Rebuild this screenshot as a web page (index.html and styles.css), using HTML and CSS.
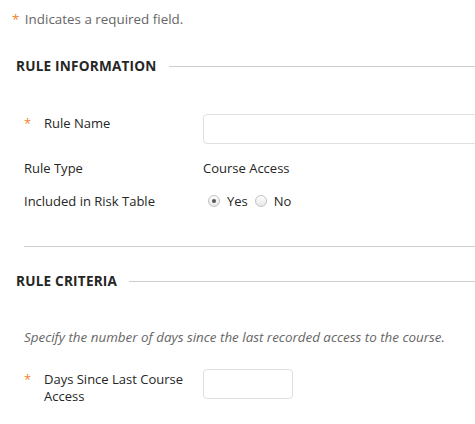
FILE: index.html
```html
<!DOCTYPE html>
<html>
<head>
<meta charset="utf-8">
<link rel="stylesheet" href="styles.css">
</head>
<body>
<div class="page">
  <p class="req-note"><span class="star">*</span> Indicates a required field.</p>

  <div class="section">
    <h2 class="section-title"><span>RULE INFORMATION</span></h2>
    <div class="rows">
      <div class="row row-input">
        <div class="label"><span class="star">*</span><span>Rule Name</span></div>
        <div class="value"><input class="text-input wide" type="text"></div>
      </div>
      <div class="row">
        <div class="label plain">Rule Type</div>
        <div class="value">Course Access</div>
      </div>
      <div class="row">
        <div class="label plain">Included in Risk Table</div>
        <div class="value radios">
          <span class="radio checked"></span><span class="radio-label">Yes</span>
          <span class="radio"></span><span class="radio-label">No</span>
        </div>
      </div>
    </div>
  </div>

  <div class="divider"></div>

  <div class="section">
    <h2 class="section-title"><span>RULE CRITERIA</span></h2>
    <p class="instructions">Specify the number of days since the last recorded access to the course.</p>
    <div class="row row-input">
      <div class="label"><span class="star">*</span><span>Days Since Last Course<br>Access</span></div>
      <div class="value"><input class="text-input small" type="text"></div>
    </div>
  </div>
</div>
</body>
</html>
```
FILE: styles.css
```css
* { box-sizing: border-box; }
html, body { margin: 0; padding: 0; background: #fff; }
body {
  font-family: "Open Sans", "Liberation Sans", sans-serif;
  font-size: 13px;
  color: #262626;
  overflow: hidden;
}
.page { padding: 10px 0 0 0; width: 475px; overflow: hidden; }
.req-note {
  margin: 0 0 0 12px;
  font-size: 13.4px;
  line-height: 18px;
  color: #666;
}
.star { color: #f0822d; }
.req-note .star { margin-right: 2px; }
.section-title {
  margin: 29px 0 0 16px;
  display: flex;
  align-items: center;
  font-size: 13.6px;
  font-weight: 700;
  letter-spacing: 0.2px;
  line-height: 18px;
  color: #262626;
}
.section-title::after {
  content: "";
  flex: 1;
  height: 1px;
  background: #cdcdcd;
  margin-left: 12px;
}
.rows { margin-top: 39px; }
.row {
  display: flex;
  margin-left: 24px;
  line-height: 18px;
}
.row + .row { margin-top: 15px; }
.label {
  width: 179px;
  flex: none;
  display: flex;
}
.label .star { width: 20px; flex: none; }
.value { flex: 1; min-width: 0; }
.text-input {
  display: block;
  height: 30px;
  border: 1px solid #e0e0e0;
  border-radius: 4px;
  background: #fff;
  margin: 0;
}
.text-input.wide { width: calc(100% + 10px); }
.text-input.small { width: 90px; margin-top: -2px; }
.radios { display: flex; align-items: center; padding-left: 5px; }
.radio {
  width: 12px;
  height: 12px;
  border-radius: 50%;
  border: 1px solid #c2c2c2;
  background: linear-gradient(#fdfdfd, #e8e8e8);
  position: relative;
  flex: none;
}
.radio.checked::after {
  content: "";
  position: absolute;
  left: 3px; top: 3px;
  width: 4px; height: 4px;
  border-radius: 50%;
  background: #555;
}
.radio-label { margin-left: 7px; margin-right: 7px; }
.divider {
  height: 1px;
  background: #cdcdcd;
  margin: 36px 0 0 24px;
}
.section:last-child .section-title { margin-top: 25px; }
.instructions {
  margin: 38px 0 0 24px;
  font-size: 13.4px;
  font-style: italic;
  color: #666;
  line-height: 18px;
}
.section:last-child .row { margin-top: 25px; }
.section:last-child .label { line-height: 17px; }
```
